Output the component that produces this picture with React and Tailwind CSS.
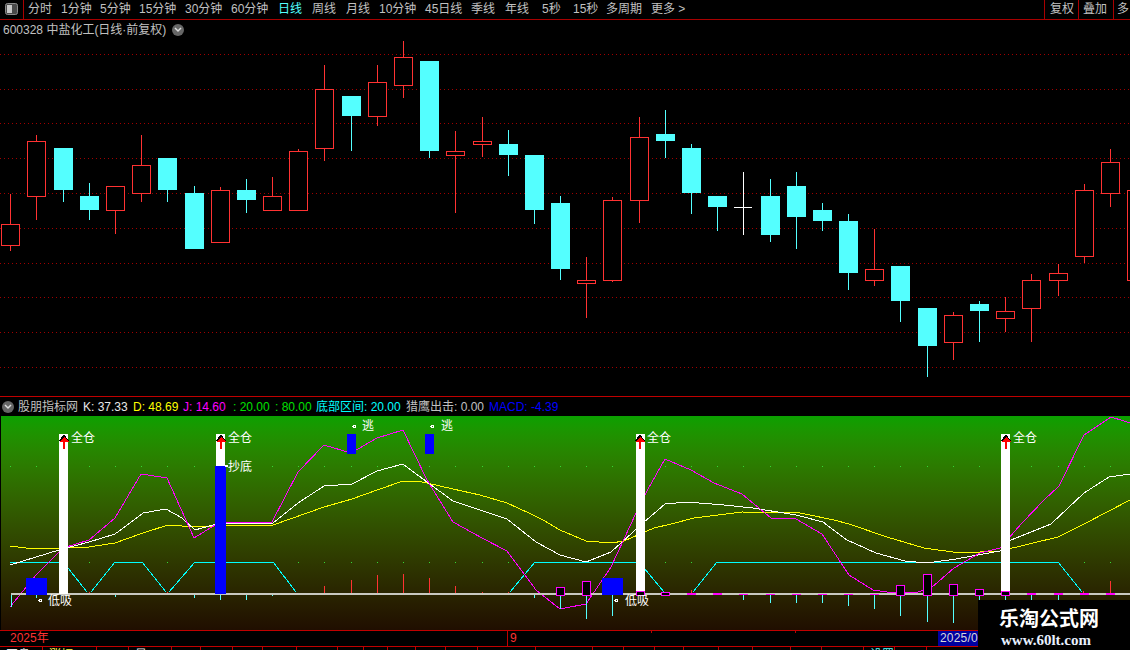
import React from 'react'

const RED = '#ff3232'
const CYAN = '#54ffff'
const MAG = '#ff00ff'

// k: x, high, top, bottom, low, kind (r = up, c = down, w = flat)
const candles = [
  [10, 194, 224, 245, 251, 'r'], [36, 135, 141, 196, 220, 'r'], [63, 148, 148, 190, 202, 'c'], [89, 183, 196, 210, 220, 'c'],
  [115, 186, 186, 210, 234, 'r'], [141, 135, 165, 193, 202, 'r'], [167, 158, 158, 190, 202, 'c'], [194, 186, 193, 249, 249, 'c'],
  [220, 187, 190, 242, 242, 'r'], [246, 179, 190, 200, 213, 'c'], [272, 177, 196, 210, 210, 'r'], [298, 149, 151, 210, 210, 'r'],
  [324, 65, 89, 148, 161, 'r'], [351, 96, 96, 116, 151, 'c'], [377, 65, 82, 116, 126, 'r'], [403, 41, 57, 85, 98, 'r'],
  [429, 61, 61, 151, 158, 'c'], [455, 131, 151, 155, 213, 'r'], [482, 117, 141, 144, 157, 'r'], [508, 130, 144, 155, 176, 'c'],
  [534, 155, 155, 210, 224, 'c'], [560, 196, 203, 269, 280, 'c'], [586, 257, 280, 283, 318, 'r'], [612, 197, 200, 280, 282, 'r'],
  [639, 117, 137, 200, 223, 'r'], [665, 110, 134, 141, 158, 'c'], [691, 144, 148, 193, 214, 'c'], [717, 196, 196, 207, 231, 'c'],
  [770, 179, 196, 235, 242, 'c'], [796, 172, 186, 217, 249, 'c'], [822, 203, 210, 221, 231, 'c'], [848, 214, 221, 273, 290, 'c'],
  [874, 229, 269, 280, 286, 'r'], [900, 266, 266, 301, 322, 'c'], [927, 308, 308, 346, 377, 'c'], [953, 312, 315, 342, 360, 'r'],
  [979, 301, 304, 311, 342, 'c'], [1005, 297, 311, 318, 332, 'r'], [1031, 274, 280, 308, 342, 'r'], [1058, 264, 273, 280, 296, 'r'],
  [1084, 184, 190, 256, 263, 'r'], [1110, 149, 162, 193, 207, 'r'], [1136, 160, 190, 280, 290, 'r'],
]
const gridY = [54, 89, 123, 158, 193, 228, 263, 297, 332, 367]
const slots = [10, 36, 63, 89, 115, 141, 167, 194, 220, 246, 272, 298, 324, 351, 377, 403, 429, 455, 482, 508, 534, 560, 586, 612, 639, 665, 691, 717, 743, 770, 796, 822, 848, 874, 900, 927, 953, 979, 1005, 1031, 1058, 1084, 1110]

const jLine = '10,607 36,575 63,548 89,540 115,518 141,474 167,478 194,538 220,522 246,522 272,522 298,472 324,445 351,453 377,438 403,430 427,480 453,522 482,538 507,551 536,590 560,609 586,604 611,567 643,498 665,459 691,470 714,483 742,494 771,518 796,519 822,534 849,575 873,590 887,592 918,592 931,588 954,568 980,553 1000,548 1022,523 1044,500 1059,486 1084,435 1111,417 1137,425'
const kLine = '10,565 59,550 89,542 115,534 134,520 143,513 166,509 182,518 195,530 220,523 243,523 273,523 298,503 324,486 352,484 377,471 403,464 427,482 453,501 480,510 507,519 536,542 560,555 586,562 611,552 643,523 665,504 687,502 724,505 753,508 796,515 823,522 847,540 876,553 905,561 927,563 956,559 1000,551 1011,540 1051,524 1084,493 1109,477 1130,474'
const dLine = '10,546 34,549 59,548 89,547 115,543 143,533 168,525 195,527 214,526 243,525 273,525 290,519 324,507 352,499 377,490 403,481 417,481 427,483 453,489 480,495 507,503 529,513 543,520 560,530 586,541 611,543 624,541 654,528 671,524 694,518 742,512 800,513 834,520 849,524 887,537 924,548 960,553 1000,551 1058,537 1084,524 1130,500'
const cyanLines = [
  '10,562 63,562 68,568 87,592', '91,592 115,562 142,562 166,592', '169,592 195,562 273,562 296,592',
  '510,592 535,562 635,562 644,568 664,592', '693,592 717,562 1058,562 1082,592',
]
const redTicks = [[89, 592], [167, 592], [324, 586], [351, 580], [377, 575], [403, 574], [429, 578], [455, 586], [482, 592], [508, 592], [691, 590], [1083, 591], [1110, 581]]
const cyanTicks = [[11, 607], [36, 598], [115, 597], [194, 598], [220, 600], [246, 600], [272, 596], [534, 598], [560, 609], [586, 619], [612, 616], [743, 600], [770, 603], [796, 603], [822, 603], [848, 606], [874, 609], [900, 616], [927, 622], [953, 623], [979, 600], [1005, 600], [1031, 600], [1058, 600]]
const boxes = [[560, 587], [586, 581], [640, 591], [665, 592], [900, 585], [927, 574], [953, 584], [979, 589], [1005, 591]]
const flats = [691, 717, 1031, 1058, 1084, 1110]
const thins = [743, 770, 796, 822, 848, 874]
const fullBars = [59, 636, 1001]

const tabs = ['分时', '1分钟', '5分钟', '15分钟', '30分钟', '60分钟', '日线', '周线', '月线', '10分钟', '45日线', '季线', '年线', '5秒', '15秒', '多周期', '更多 >']
const cells = [['开盘', 'text-[#e8e8e8]'], ['涨幅', 'text-[#ffff54]'], ['', ''], ['量', 'text-[#e8e8e8]']]

function Candle({ d }) {
  const [x, high, top, bot, low, kind] = d
  const color = kind === 'r' ? RED : CYAN
  return (
    <g>
      <rect x={x} y={high} width="1" height={low - high} fill={color} />
      {kind === 'r'
        ? <rect x={x - 8.5} y={top + 0.5} width="18" height={bot - top} fill="#000" stroke={color} />
        : <rect x={x - 9} y={top} width="19" height={bot - top} fill={color} />}
    </g>
  )
}

function Arrow({ x }) {
  return (
    <g>
      <path d={`M${x} 434 L${x - 5} 441 H${x + 5} Z`} fill="#000" />
      <path d={`M${x} 437 L${x - 5} 442 H${x + 5} Z`} fill="#ff0000" />
      <rect x={x - 1} y="442" width="2" height="7" fill="#ff0000" />
    </g>
  )
}

function Mark({ x, y, label }) {
  return <text x={x} y={y} fill="#fff" className="text-[12px]">{label}</text>
}

function Ring({ x, y }) {
  return <circle cx={x} cy={y} r="1.5" fill="none" stroke="#fff" />
}

function PriceChart() {
  return (
    <svg width="1130" height="356" viewBox="0 40 1130 356" shapeRendering="crispEdges" className="block">
      {gridY.map(y => <line key={y} x1="0" x2="1130" y1={y + 0.5} y2={y + 0.5} stroke="#a00000" strokeDasharray="1 3" />)}
      {candles.map(d => <Candle key={d[0]} d={d} />)}
      <rect x="743" y="172" width="1" height="63" fill="#fff" />
      <rect x="734" y="207" width="18" height="1" fill="#fff" />
    </svg>
  )
}

function IndicatorChart() {
  return (
    <svg width="1130" height="214" viewBox="0 416 1130 214" shapeRendering="crispEdges" className="block font-['Liberation_Sans','Noto_Sans_CJK_SC',sans-serif]">
      <rect x="0" y="416" width="1" height="214" fill="#000" />
      {slots.map(x => <rect key={x} x={x} y="466" width="1" height="1" fill="#35d835" />)}
      {slots.map(x => <rect key={x} x={x} y="562" width="1" height="1" fill="#35d835" />)}

      {cyanLines.map(p => <polyline key={p} points={p} fill="none" stroke="#00ffff" />)}
      <polyline points={dLine} fill="none" stroke="#ffff00" />
      <polyline points={kLine} fill="none" stroke="#ffffff" />
      <polyline points={jLine} fill="none" stroke={MAG} />

      <rect x="11" y="593" width="1119" height="2" fill="#c8c8c0" />
      {redTicks.map(([x, y]) => <rect key={x} x={x} y={y} width="1" height={593 - y} fill={RED} />)}
      {cyanTicks.map(([x, y]) => <rect key={x} x={x} y="595" width="1" height={y - 595} fill={CYAN} />)}

      {fullBars.map(x => <rect key={x} x={x} y="434" width="9" height="160" fill="#fff" />)}
      <rect x="216" y="434" width="9" height="32" fill="#fff" />
      <rect x="215" y="466" width="11" height="128" fill="#0000ff" />
      <rect x="225" y="465" width="3" height="2" fill="#fff" />
      <rect x="347" y="434" width="9" height="20" fill="#0000ff" />
      <rect x="425" y="434" width="9" height="20" fill="#0000ff" />
      <rect x="26" y="578" width="21" height="17" fill="#0000ff" />
      <rect x="602" y="578" width="21" height="17" fill="#0000ff" />

      {boxes.map(([x, y]) => (
        <g key={x}>
          <rect x={x - 4} y={y} width="9" height={596 - y} fill={MAG} />
          <rect x={x - 3} y={y + 1} width="7" height={594 - y} fill="#000" />
        </g>
      ))}
      {flats.map(x => <rect key={x} x={x - 4} y="593" width="9" height="2" fill={MAG} />)}
      {thins.map(x => <rect key={x} x={x - 4} y="594" width="9" height="1" fill={MAG} />)}

      {[64, 221, 640, 1006].map(x => <Arrow key={x} x={x} />)}
      {[71, 228, 647, 1013].map(x => <Mark key={x} x={x} y="442" label="全仓" />)}
      <Mark x="228" y="471" label="抄底" />
      <Ring x={354.5} y={426.5} />
      <Mark x="362" y="430" label="逃" />
      <Ring x={432.5} y={426.5} />
      <Mark x="441" y="430" label="逃" />
      <Ring x={40.5} y={600.5} />
      <Mark x="48" y="605" label="低吸" />
      <Ring x={616.5} y={600.5} />
      <Mark x="625" y="605" label="低吸" />
    </svg>
  )
}

export default function App() {
  return (
    <div className="relative w-[1130px] h-[650px] overflow-hidden bg-black font-['Liberation_Sans','Noto_Sans_CJK_SC',sans-serif] text-[12px] text-[#c0c0c0]">
      {/* top toolbar */}
      <div className="flex h-[20px] border-b border-[#a80000]">
        <div className="w-[24px] flex items-center justify-center border-r border-[#a80000] pb-[1px]">
          <svg width="13" height="12" viewBox="0 0 13 12">
            <rect x="0.5" y="0.5" width="12" height="11" rx="2" fill="#4a4a4a" stroke="#8a8a8a" />
            <rect x="2" y="2" width="5" height="8" fill="#c8c8c8" />
          </svg>
        </div>
        <div className="grid grid-cols-[33px_39px_39px_46px_46px_47px_34px_34px_33px_46px_46px_34px_37px_31px_33px_45px_50px] pl-[4px] items-center leading-[19px] whitespace-nowrap">
          {tabs.map(t => <span key={t} className={t === '日线' ? 'text-[#54ffff]' : ''}>{t}</span>)}
        </div>
        <div className="ml-auto flex w-[86px] overflow-hidden leading-[19px]">
          <span className="w-[34px] shrink-0 border-l border-[#a80000] pl-[5px]">复权</span>
          <span className="w-[35px] shrink-0 border-l border-[#a80000] pl-[4px]">叠加</span>
          <span className="w-[17px] shrink-0 border-l border-[#a80000] pl-[3px]">多</span>
        </div>
      </div>

      {/* stock title */}
      <div className="flex items-center h-[20px] pl-[3px] gap-[6px] leading-none">
        <span>600328 中盐化工(日线·前复权)</span>
        <span className="w-[12px] h-[12px] rounded-full bg-[#666] flex items-center justify-center">
          <svg width="8" height="6" viewBox="0 0 8 6"><path d="M1 1 L4 4 L7 1" fill="none" stroke="#ddd" strokeWidth="1.5" /></svg>
        </span>
      </div>

      <PriceChart />

      {/* indicator header */}
      <div className="h-[20px] border-t border-[#c00000] flex items-center leading-none whitespace-nowrap">
        <span className="w-[18px] pl-[2px] flex">
          <span className="w-[12px] h-[12px] rounded-full bg-[#666] flex items-center justify-center">
            <svg width="8" height="6" viewBox="0 0 8 6"><path d="M1 1 L4 4 L7 1" fill="none" stroke="#ddd" strokeWidth="1.5" /></svg>
          </span>
        </span>
        <span className="w-[65px]">股朋指标网</span>
        <span className="w-[50px] text-[#e8e8e8]">K: 37.33</span>
        <span className="w-[50px] text-[#ffff00]">D: 48.69</span>
        <span className="w-[50px] text-[#ff00ff]">J: 14.60</span>
        <span className="w-[42px] text-[#00e000]">: 20.00</span>
        <span className="w-[41px] text-[#00e000]">: 80.00</span>
        <span className="w-[90px] text-[#00ffff]">底部区间: 20.00</span>
        <span className="w-[83px]">猎鹰出击: 0.00</span>
        <span className="text-[#0000ff]">MACD: -4.39</span>
      </div>

      <div className="h-[214px] bg-linear-to-b from-[#0aa000] to-[#200e00]">
        <IndicatorChart />
      </div>

      {/* time axis */}
      <div className="relative flex h-[17px] border-y border-[#c00000] leading-[15px]">
        <span className="w-[507px] pl-[10px] text-[#ff3232]">2025年</span>
        <span className="w-[431px] border-l border-[#c00000] pl-[2px] text-[#ff3232]">9</span>
        <span className="flex-1 bg-[#0000a0] pl-[2px] text-[#d8d8d8] tracking-[0.2px]">2025/09/05</span>
        <i className="absolute left-[651px] top-0 w-px h-[2px] bg-[#c00000]" />
        <i className="absolute left-[795px] top-0 w-px h-[2px] bg-[#c00000]" />
      </div>

      {/* status strip, mostly cut off by the window */}
      <div className="grid grid-cols-[43px_54px_32px_43px_29px_32px_30px_34px_41px_26px_24px_28px_30px_32px_58px_57px_31px_31px_29px_35px_34px_38px_31px_42px_31px_32px_1fr] h-[3px] overflow-hidden">
        {Array.from({ length: 27 }, (_, i) => (
          <span key={i} className={`border-r border-[#c00000] pl-[6px] leading-[16px] whitespace-nowrap ${cells[i] ? cells[i][1] : ''} ${i === 24 ? 'text-[#54ffff]' : ''}`}>
            {cells[i] ? cells[i][0] : i === 24 ? '设置' : ''}
          </span>
        ))}
      </div>

      {/* watermark */}
      <div className="absolute left-[978px] top-[600px] w-[152px] h-[50px] bg-black flex flex-col items-start text-white">
        <span className="pl-[21px] text-[20px] leading-[26px] mt-[5px] font-bold font-['Noto_Sans_CJK_SC',sans-serif]">乐淘公式网</span>
        <span className="pl-[23px] text-[15px] leading-[16px] mt-[1px] font-bold text-[#e8f0ff] font-['Liberation_Serif',serif]">www.60lt.com</span>
      </div>
    </div>
  )
}
